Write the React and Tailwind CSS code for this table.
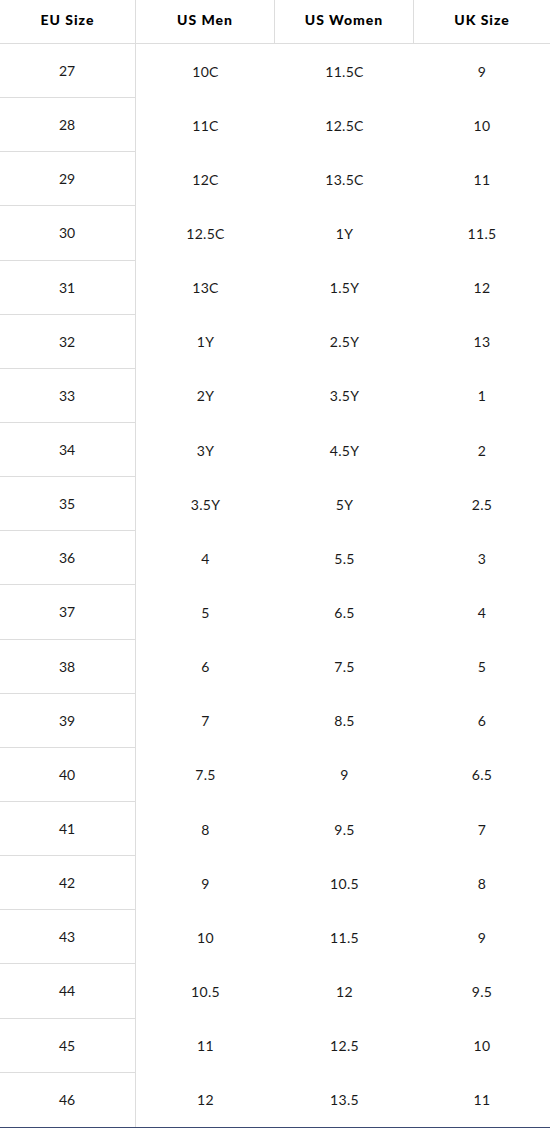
const headers = ['EU Size', 'US Men', 'US Women', 'UK Size'];

const rows = [
  ['27', '10C', '11.5C', '9'],
  ['28', '11C', '12.5C', '10'],
  ['29', '12C', '13.5C', '11'],
  ['30', '12.5C', '1Y', '11.5'],
  ['31', '13C', '1.5Y', '12'],
  ['32', '1Y', '2.5Y', '13'],
  ['33', '2Y', '3.5Y', '1'],
  ['34', '3Y', '4.5Y', '2'],
  ['35', '3.5Y', '5Y', '2.5'],
  ['36', '4', '5.5', '3'],
  ['37', '5', '6.5', '4'],
  ['38', '6', '7.5', '5'],
  ['39', '7', '8.5', '6'],
  ['40', '7.5', '9', '6.5'],
  ['41', '8', '9.5', '7'],
  ['42', '9', '10.5', '8'],
  ['43', '10', '11.5', '9'],
  ['44', '10.5', '12', '9.5'],
  ['45', '11', '12.5', '10'],
  ['46', '12', '13.5', '11'],
];

const widths = ['w-[136px]', 'w-[139px]', 'w-[139px]', 'flex-1'];

const App = () => {
  return (
    <div className="w-[550px] bg-white text-[#1a1a1a] font-['Lato',sans-serif]">
      <div className="flex h-[44px] border-b border-[#dddddd]">
        {headers.map((h, i) => (
          <div
            key={h}
            className={`${widths[i]} flex items-center justify-center pb-[4px] text-[14px] font-black tracking-[0.07em] text-black ${
              i < 3 ? 'border-r border-[#dddddd]' : ''
            }`}
          >
            {h}
          </div>
        ))}
      </div>

      <div className="border-b border-[#3b4a72]">
        {rows.map((r, idx) => (
          <div key={r[0]} className="flex h-[54.15px]">
            <div
              className={`w-[136px] flex items-center justify-center border-r border-[#dddddd] text-[14px] ${
                idx < rows.length - 1 ? 'border-b' : ''
              }`}
            >
              <span className="pr-[1px]">{r[0]}</span>
            </div>
            {r.slice(1).map((v, i) => (
              <div
                key={i}
                className={`${widths[i + 1]} flex items-center justify-center text-[14px] tracking-[0.02em]`}
              >
                {v}
              </div>
            ))}
          </div>
        ))}
      </div>
    </div>
  );
};

export default App;
